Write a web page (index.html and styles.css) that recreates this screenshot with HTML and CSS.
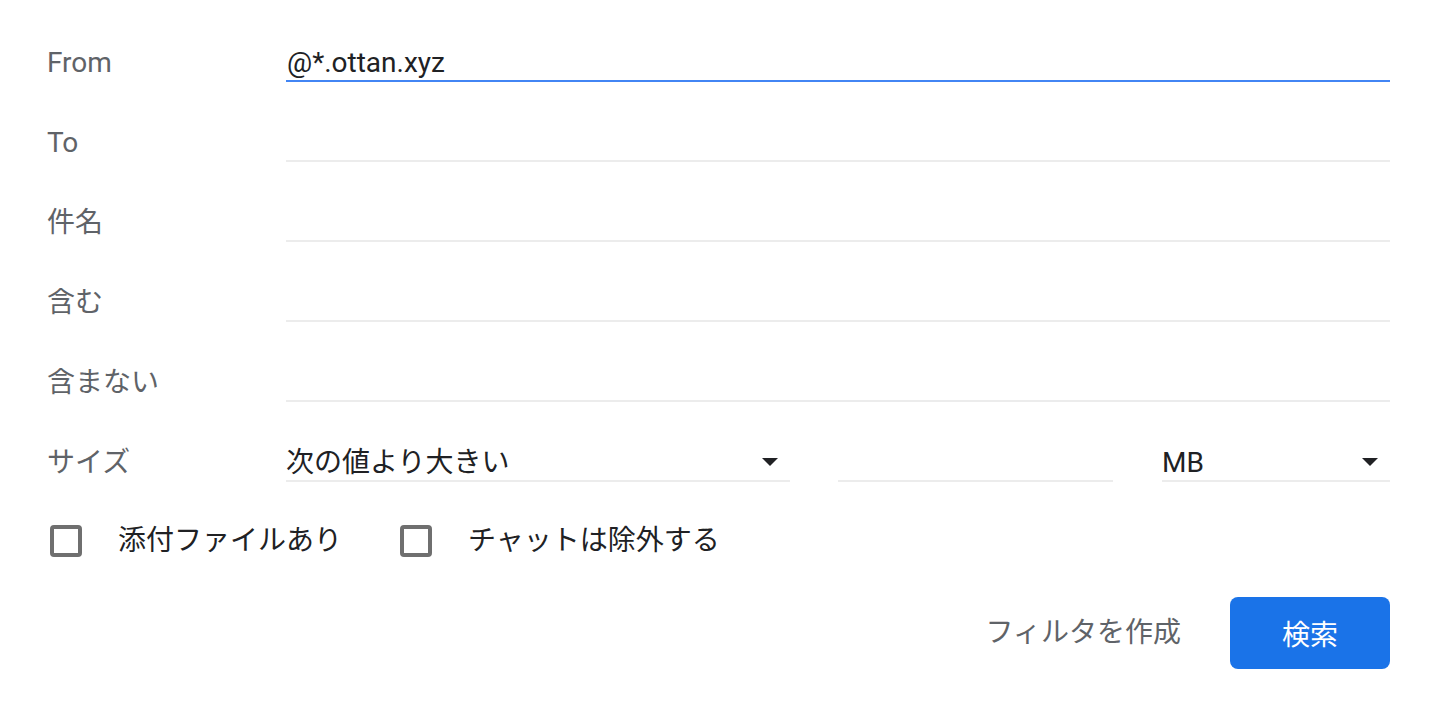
FILE: index.html
```html
<!DOCTYPE html>
<html lang="ja">
<head>
<meta charset="utf-8">
<title>検索オプション</title>
<link rel="stylesheet" href="styles.css">
</head>
<body>
<form class="search-form">
  <div class="row">
    <label class="label">From</label>
    <div class="field field-active">@*.ottan.xyz</div>
  </div>
  <div class="row">
    <label class="label">To</label>
    <div class="field"></div>
  </div>
  <div class="row">
    <label class="label">件名</label>
    <div class="field"></div>
  </div>
  <div class="row">
    <label class="label">含む</label>
    <div class="field"></div>
  </div>
  <div class="row">
    <label class="label">含まない</label>
    <div class="field"></div>
  </div>
  <div class="row">
    <label class="label">サイズ</label>
    <div class="size-group">
      <div class="field select select-op">次の値より大きい<span class="arrow"></span></div>
      <div class="field size-input"></div>
      <div class="field select select-unit">MB<span class="arrow"></span></div>
    </div>
  </div>
  <div class="checks">
    <div class="check"><span class="box"></span><span class="check-label">添付ファイルあり</span></div>
    <div class="check"><span class="box"></span><span class="check-label">チャットは除外する</span></div>
  </div>
  <div class="actions">
    <span class="link-btn">フィルタを作成</span>
    <span class="primary-btn">検索</span>
  </div>
</form>
</body>
</html>
```

FILE: styles.css
```css
html, body {
  margin: 0;
  padding: 0;
  background: #ffffff;
}

body {
  font-family: Roboto, "Noto Sans CJK JP", sans-serif;
  font-size: 28px;
  color: #202124;
}

.search-form {
  width: 1432px;
  box-sizing: border-box;
  padding: 2px 42px 0 47px;
}

.row {
  display: grid;
  grid-template-columns: 239px 1fr;
  height: 80px;
  align-items: end;
}

.label {
  color: #5f6368;
  line-height: 34px;
  padding-bottom: 2px;
}

.field {
  height: 36px;
  box-sizing: border-box;
  line-height: 34px;
  border-bottom: 2px solid #ececec;
  color: #202124;
  white-space: nowrap;
}

.field-active {
  border-bottom-color: #4285f4;
  padding-left: 1px;
}

.size-group {
  display: flex;
  gap: 48px;
}

.select {
  position: relative;
}

.select-op {
  width: 504px;
}

.size-input {
  width: 275px;
}

.select-unit {
  width: 228px;
  margin-left: 1px;
}

.arrow {
  position: absolute;
  right: 12px;
  top: 12px;
  width: 0;
  height: 0;
  border-left: 8px solid transparent;
  border-right: 8px solid transparent;
  border-top: 8px solid #202124;
}

.checks {
  display: flex;
  align-items: center;
  height: 48px;
  margin-top: 35px;
}

.check {
  display: flex;
  align-items: center;
  margin-right: 55px;
}

.box {
  width: 32px;
  height: 32px;
  box-sizing: border-box;
  border: 4px solid #6f6f6f;
  border-radius: 4px;
  margin-left: 3px;
  margin-right: 36px;
}

.check-label {
  line-height: 34px;
  color: #202124;
}

.actions {
  display: flex;
  justify-content: flex-end;
  align-items: center;
  gap: 49px;
  margin-top: 32px;
}

.link-btn {
  color: #5f6368;
  line-height: 34px;
}

.primary-btn {
  width: 160px;
  height: 72px;
  border-radius: 8px;
  background: #1a73e8;
  color: #ffffff;
  display: flex;
  align-items: center;
  justify-content: center;
}
```
